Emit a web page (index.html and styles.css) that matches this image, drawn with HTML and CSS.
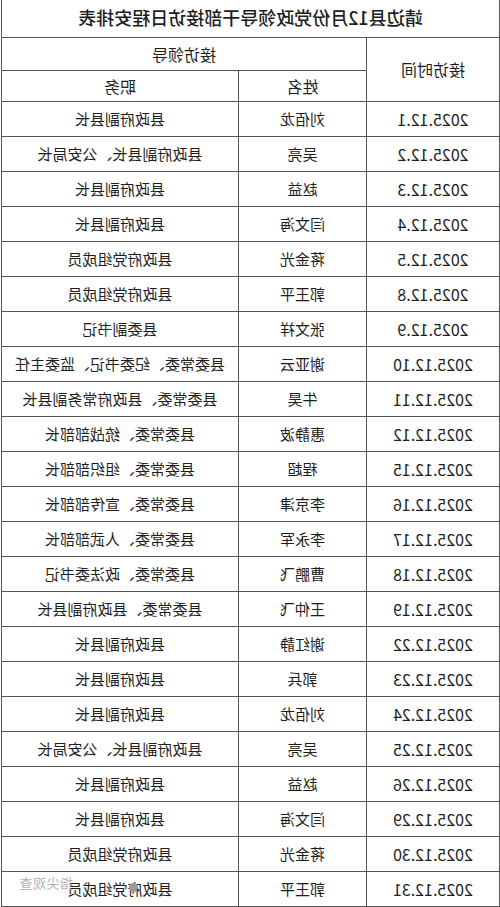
FILE: index.html
```html
<!DOCTYPE html>
<html lang="zh-CN">
<head>
<meta charset="utf-8">
<title>靖边县12月份党政领导干部接访日程安排表</title>
<link rel="stylesheet" href="styles.css">
</head>
<body>
<div class="sheet">
  <table class="schedule">
    <colgroup>
      <col class="c-date">
      <col class="c-name">
      <col class="c-post">
    </colgroup>
    <thead>
      <tr class="r-title"><th colspan="3" class="title">靖边县12月份党政领导干部接访日程安排表</th></tr>
      <tr class="r-h1"><th rowspan="2">接访时间</th><th colspan="2">接访领导</th></tr>
      <tr class="r-h2"><th>姓名</th><th>职务</th></tr>
    </thead>
    <tbody>
      <tr><td class="date">2025.12.1</td><td>刘佰龙</td><td>县政府副县长</td></tr>
      <tr><td class="date">2025.12.2</td><td>吴亮</td><td>县政府副县长、公安局长</td></tr>
      <tr><td class="date">2025.12.3</td><td>赵益</td><td>县政府副县长</td></tr>
      <tr><td class="date">2025.12.4</td><td>闫文海</td><td>县政府副县长</td></tr>
      <tr><td class="date">2025.12.5</td><td>蒋金光</td><td>县政府党组成员</td></tr>
      <tr><td class="date">2025.12.8</td><td>郭王平</td><td>县政府党组成员</td></tr>
      <tr><td class="date">2025.12.9</td><td>张文祥</td><td>县委副书记</td></tr>
      <tr><td class="date">2025.12.10</td><td>谢亚云</td><td>县委常委、纪委书记、监委主任</td></tr>
      <tr><td class="date">2025.12.11</td><td>牛昊</td><td>县委常委、县政府常务副县长</td></tr>
      <tr><td class="date">2025.12.12</td><td>惠静波</td><td>县委常委、统战部部长</td></tr>
      <tr><td class="date">2025.12.15</td><td>程超</td><td>县委常委、组织部部长</td></tr>
      <tr><td class="date">2025.12.16</td><td>李京津</td><td>县委常委、宣传部部长</td></tr>
      <tr><td class="date">2025.12.17</td><td>李永军</td><td>县委常委、人武部部长</td></tr>
      <tr><td class="date">2025.12.18</td><td>曹鹏飞</td><td>县委常委、政法委书记</td></tr>
      <tr><td class="date">2025.12.19</td><td>王仲飞</td><td>县委常委、县政府副县长</td></tr>
      <tr><td class="date">2025.12.22</td><td>谢红静</td><td>县政府副县长</td></tr>
      <tr><td class="date">2025.12.23</td><td>郭兵</td><td>县政府副县长</td></tr>
      <tr><td class="date">2025.12.24</td><td>刘佰龙</td><td>县政府副县长</td></tr>
      <tr><td class="date">2025.12.25</td><td>吴亮</td><td>县政府副县长、公安局长</td></tr>
      <tr><td class="date">2025.12.26</td><td>赵益</td><td>县政府副县长</td></tr>
      <tr><td class="date">2025.12.29</td><td>闫文海</td><td>县政府副县长</td></tr>
      <tr><td class="date">2025.12.30</td><td>蒋金光</td><td>县政府党组成员</td></tr>
      <tr><td class="date">2025.12.31</td><td>郭王平</td><td>县政府党组成员</td></tr>
    </tbody>
  </table>
  <div class="watermark"><span class="wm-dot"></span><span class="wm-text">指尖观查</span></div>
</div>
</body>
</html>
```
FILE: styles.css
```css
html, body {
  margin: 0;
  padding: 0;
  background: #ffffff;
}

.sheet {
  position: relative;
  width: 500px;
  height: 907px;
  overflow: hidden;
  background: #ffffff;
  transform: scaleX(-1);
  font-family: "Noto Sans CJK SC", "Noto Sans", sans-serif;
  color: #1e1e1e;
}

.schedule {
  border-collapse: collapse;
  table-layout: fixed;
  width: 498px;
  margin-left: 0;
}

.c-date { width: 133px; }
.c-name { width: 128px; }
.c-post { width: 237px; }

.schedule th,
.schedule td {
  border: 1px solid #555555;
  padding: 0;
  text-align: center;
  vertical-align: middle;
  white-space: nowrap;
}

.schedule th {
  font-size: 16px;
  font-weight: 400;
}

.schedule td {
  font-size: 15px;
  font-weight: 400;
}

.schedule td.date {
  font-size: 16px;
}

.r-title { height: 37px; }
.r-h1 { height: 33px; }
.r-h2 { height: 31px; }
.schedule tbody tr { height: 35px; }

.schedule th.title {
  border-top: none;
  font-size: 18px;
  font-weight: 500;
  padding-bottom: 3px;
}

.watermark {
  position: absolute;
  top: 873px;
  left: 362px;
  display: flex;
  align-items: center;
  gap: 56px;
  font-size: 13px;
  line-height: 18px;
  color: #b4b4b4;
  pointer-events: none;
}

.wm-dot {
  width: 9px;
  height: 9px;
  border-radius: 50%;
  background: #9a9a9a;
  margin-top: 10px;
}

.wm-text {
  letter-spacing: 0.5px;
}
```
